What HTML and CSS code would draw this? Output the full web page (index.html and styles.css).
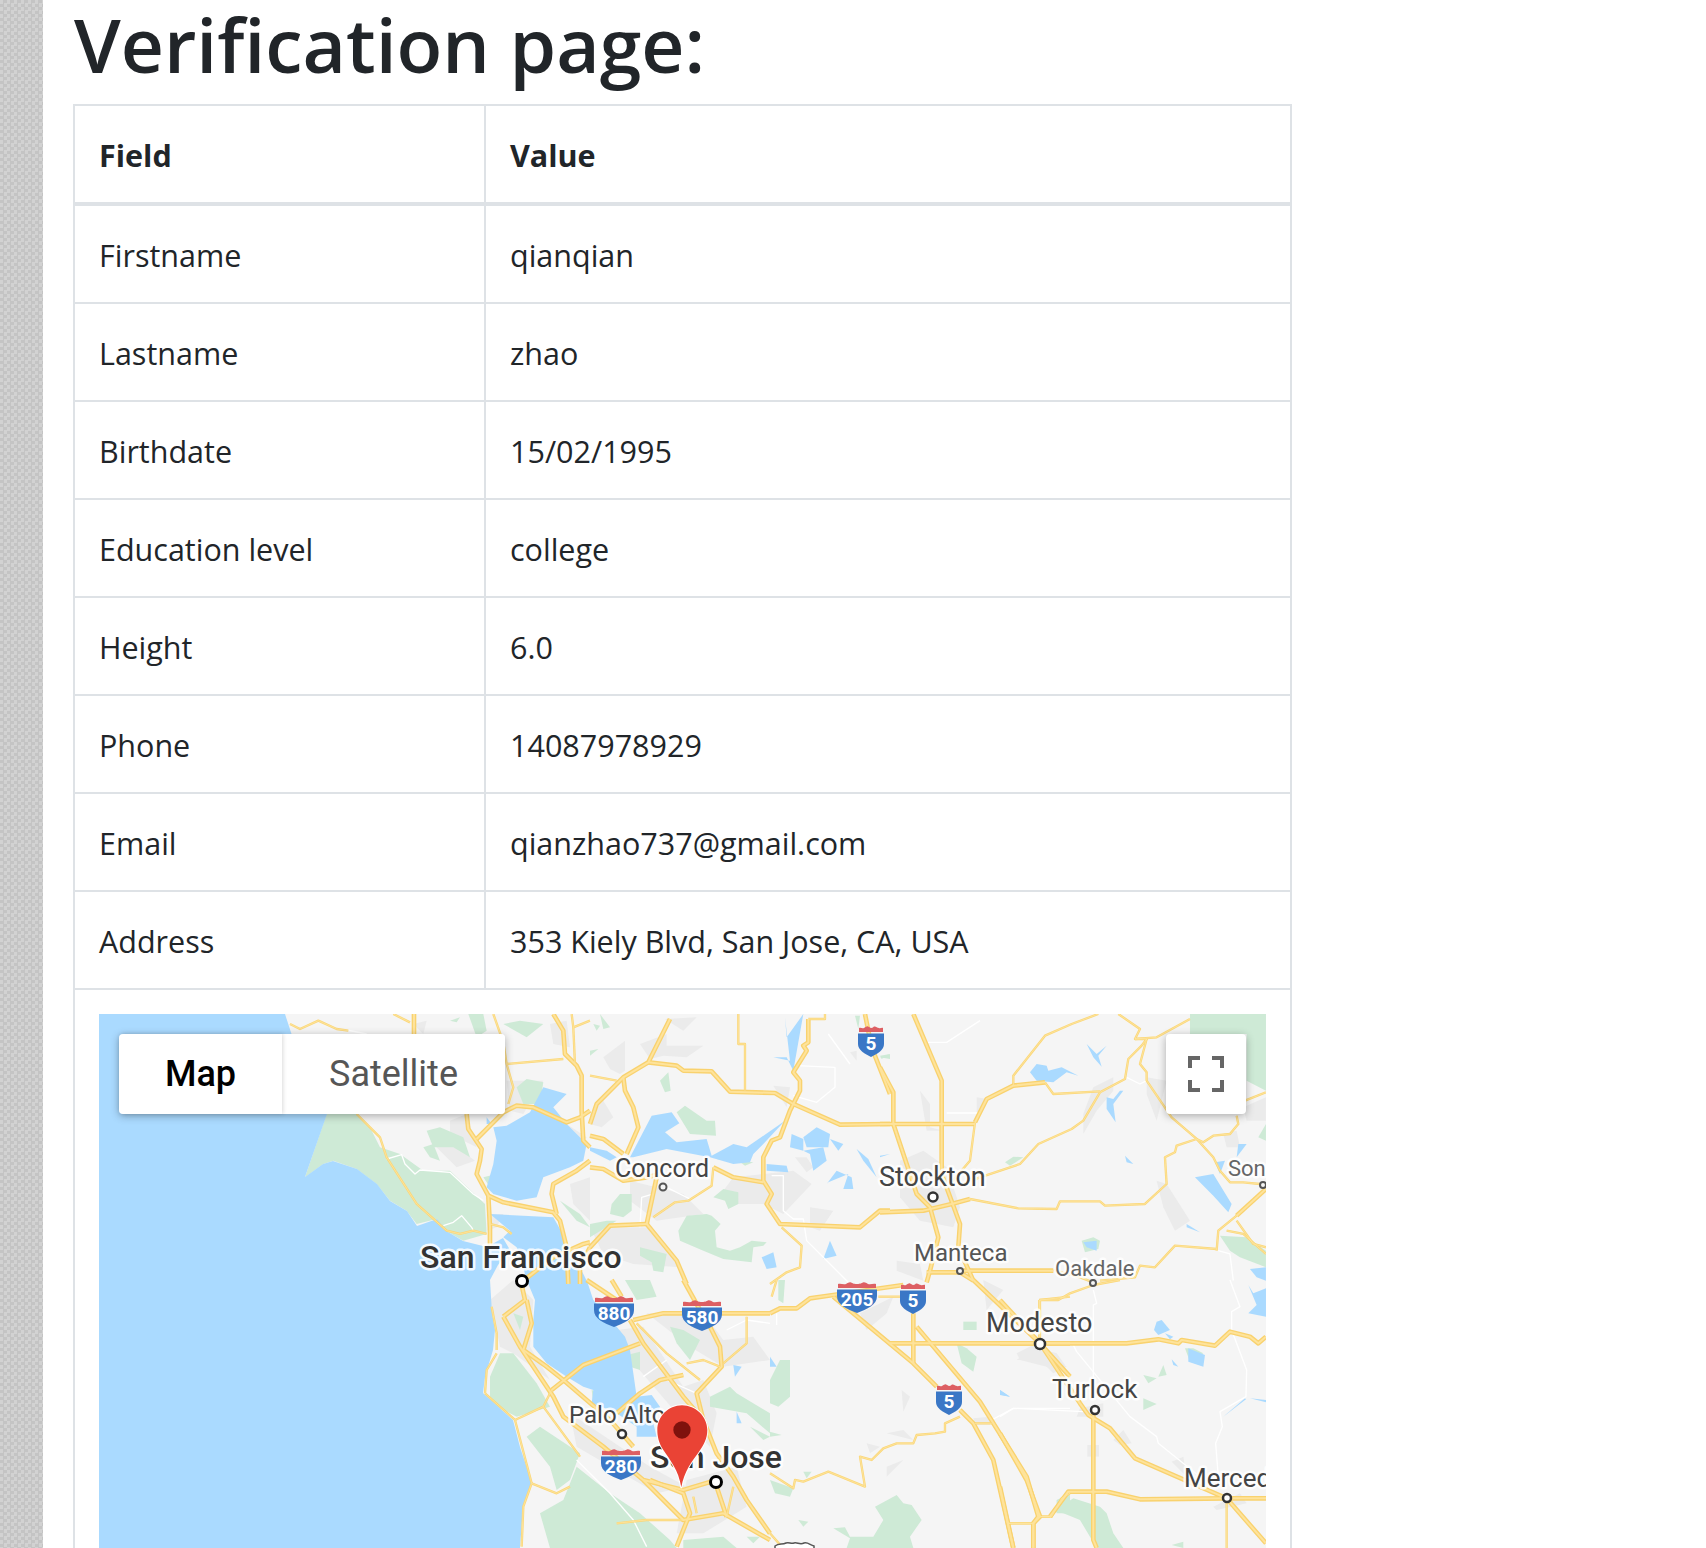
FILE: index.html
```html
<!DOCTYPE html>
<html lang="en">
<head>
<meta charset="utf-8">
<title>Verification page</title>
<link rel="stylesheet" href="styles.css">
</head>
<body>
<div class="page">
  <aside class="side"></aside>
  <main class="content">
    <h1 class="title">Verification page:</h1>
    <table class="info">
      <thead>
        <tr><th class="col-field">Field</th><th>Value</th></tr>
      </thead>
      <tbody>
        <tr><td>Firstname</td><td>qianqian</td></tr>
        <tr><td>Lastname</td><td>zhao</td></tr>
        <tr><td>Birthdate</td><td>15/02/1995</td></tr>
        <tr><td>Education level</td><td>college</td></tr>
        <tr><td>Height</td><td>6.0</td></tr>
        <tr><td>Phone</td><td>14087978929</td></tr>
        <tr><td>Email</td><td>qianzhao737@gmail.com</td></tr>
        <tr><td>Address</td><td>353 Kiely Blvd, San Jose, CA, USA</td></tr>
        <tr>
          <td colspan="2" class="map-cell">
            <div class="map">
              <svg class="map-art" viewBox="99 1014 1167 534" width="1167" height="534" xmlns="http://www.w3.org/2000/svg">
                <defs>
                  <g id="shield-wide">
                    <path class="sh-red" d="M1 7V3C4 2 6 4 9 3 11 2 12 1 14 1.500 16 2 16 3 20 3 24 3 24 2 26 1.500 28 1 29 2 31 3 34 4 36 2 39 3V7Z"/>
                    <path class="sh-blue" d="M0 8.500H40V15C40 24 30 28 20 32 10 28 0 24 0 15Z"/>
                  </g>
                  <g id="shield-narrow">
                    <path class="sh-red" d="M1 7V3C3 2 4 4 6 3 8 2 9 1 10 1.500 12 2 12 3 13 3 15 3 15 2 16 1.500 18 1 19 3 21 3 22 4 24 2 25 3V7Z"/>
                    <path class="sh-blue" d="M0 8.500H26V19C26 25 19 29 13 32 7 29 0 25 0 19Z"/>
                  </g>
                  <g id="major" fill="none">
                    <g transform="translate(290 1014) scale(.3333)">
                      <path d="M530 300 535 345 575 405 570 440 560 480 595 545 600 640 600 700"/>
                      <path d="M595 545 640 565 790 595 810 620 830 700 835 810"/>
                      <path d="M372 0V60"/>
                      <path d="M790 0 820 50 825 120 860 155 875 185 875 290 880 380 900 400"/>
                      <path d="M560 375 640 295 680 275 730 280 830 325 870 310 900 290"/>
                      <path d="M900 440 860 470 790 510 785 540 800 600"/>
                      <path d="M700 800 790 730 880 690 900 685"/>
                      <path d="M900 700 870 760 870 810"/>
                    </g>
                    <g transform="translate(470 1280) scale(.3333)">
                      <path d="M100 110 150 200 250 350 280 410 400 500 520 600 640 630 740 600"/>
                      <path d="M170 60 185 130 160 210 230 260 280 300 420 420 490 500"/>
                      <path d="M245 330 340 255 510 190"/>
                      <path d="M440 400 510 340 570 300 640 285"/>
                      <path d="M480 120 520 190 640 350 700 420 740 520 790 590 830 660 900 760"/>
                      <path d="M490 120 580 100 900 100"/>
                      <path d="M700 100 750 200 755 260 680 340 700 420"/>
                      <path d="M540 600 640 640 660 700 620 800"/>
                      <path d="M520 600 640 720 760 700 900 780"/>
                      <path d="M740 620 770 710"/>
                      <path d="M100 110 165 60 155 15"/>
                      <path d="M640 0 690 90"/>
                      <path d="M350 0 440 60"/>
                      <path d="M425 0 455 50"/>
                    </g>
                    <g transform="translate(590 1014) scale(.3333)">
                      <path d="M240 15 175 145 100 190 20 270 0 330"/>
                      <path d="M100 190 105 230 130 280 145 340 110 420"/>
                      <path d="M0 365 40 375 100 420"/>
                      <path d="M0 460 40 465 100 500 170 490 210 480"/>
                      <path d="M175 145 260 155 280 170 365 172 420 233 555 237 610 270 750 332 900 330"/>
                      <path d="M655 15V85L640 95 650 110 610 175 630 200 630 230 600 290 570 370 545 380 520 430 520 500 545 540 530 570 570 630 810 640 870 590 900 590"/>
                      <path d="M370 460 430 490 520 505"/>
                      <path d="M170 630 200 490"/>
                      <path d="M170 630 60 635 0 700"/>
                      <path d="M170 630 260 740 290 810"/>
                      <path d="M825 0 845 100 900 240"/>
                    </g>
                    <g transform="translate(770 1280) scale(.3333)">
                      <path d="M190 50 430 250 500 320"/>
                      <path d="M570 390 610 430 670 540 730 804"/>
                      <path d="M0 100 30 85 80 85 120 55 190 45 400 15"/>
                      <path d="M430 100V250"/>
                      <path d="M360 190H900"/>
                      <path d="M440 140 630 365 770 590 805 710 790 730V804"/>
                      <path d="M610 0 810 190 900 290"/>
                    </g>
                    <g transform="translate(880 1014) scale(.3333)">
                      <path d="M100 0 185 200V480L240 630 235 700 280 800"/>
                      <path d="M0 160 40 235V330L110 540 150 580 175 670 150 770 140 805"/>
                      <path d="M0 330H285"/>
                      <path d="M285 325 320 255 400 215 495 205"/>
                      <path d="M1070 605 1158 525"/>
                      <path d="M240 770H520"/>
                      <path d="M140 775H240L280 800"/>
                      <path d="M270 555 215 570 130 590 0 595"/>
                    </g>
                    <g transform="translate(1000 1280) scale(.3333)">
                      <path d="M0 60 120 190 240 370 265 405 330 445 405 535 680 655 798 790"/>
                      <path d="M280 400V780L290 804"/>
                      <path d="M0 190H380L475 178 535 190 545 180 645 197 690 155 750 170 775 190 798 170"/>
                      <path d="M0 620 40 804"/>
                      <path d="M0 460 80 600 120 710 100 730V804"/>
                      <path d="M150 710 205 635H320L420 658 680 655H798"/>
                    </g>
                  </g>
                  <g id="minor" fill="none">
                    <g transform="translate(290 1014) scale(.3333)">
                      <path d="M0 30 30 45 85 20 140 45 175 50"/>
                      <path d="M200 300 240 340 270 370 290 430 380 570 470 650 510 660 550 650 590 660"/>
                      <path d="M600 630 640 640 665 660"/>
                      <path d="M650 150 820 135"/>
                      <path d="M640 85 650 150 670 220 655 270"/>
                      <path d="M845 0 850 40 900 20"/>
                      <path d="M850 40 855 150"/>
                      <path d="M610 0 640 85"/>
                      <path d="M310 0 360 25"/>
                    </g>
                    <g transform="translate(470 1280) scale(.3333)">
                      <path d="M80 210V160L65 80"/>
                      <path d="M45 340 50 270 80 220"/>
                      <path d="M45 340 135 420 220 380 245 330"/>
                      <path d="M135 420 185 610 160 680 155 800"/>
                      <path d="M185 610 260 640 300 620"/>
                      <path d="M220 380 330 530"/>
                      <path d="M500 130 590 220 690 300"/>
                      <path d="M440 730 530 720 640 720"/>
                      <path d="M670 650 680 700"/>
                      <path d="M790 620 770 710"/>
                      <path d="M650 250 700 240 750 260"/>
                      <path d="M760 250 830 190V110"/>
                    </g>
                    <g transform="translate(590 1014) scale(.3333)">
                      <path d="M445 0V90H465V230"/>
                      <path d="M0 185 80 200"/>
                      <path d="M190 610 255 565 295 560 365 515 370 460"/>
                      <path d="M575 640 635 695 630 760 590 775 540 810"/>
                      <path d="M655 15H705V0"/>
                    </g>
                    <g transform="translate(770 1280) scale(.3333)">
                      <path d="M0 580 70 625 75 600 100 605 175 575 285 620 270 530 305 540 340 505 380 490 430 490 440 465 495 460 525 455V430L570 410"/>
                      <path d="M615 430H665"/>
                      <path d="M715 730H790"/>
                      <path d="M805 710H845L875 655 900 640"/>
                      <path d="M0 760 35 800"/>
                      <path d="M20 0 5 50"/>
                      <path d="M810 190V60L900 50"/>
                      <path d="M325 50H420"/>
                    </g>
                    <g transform="translate(880 1014) scale(.3333)">
                      <path d="M400 215V185L495 65 575 30 655 0"/>
                      <path d="M285 325 270 440 210 510"/>
                      <path d="M250 510 300 490 420 450 475 390 575 345 610 320 660 235 735 195 745 135 785 95 800 75 765 75 780 45 715 0"/>
                      <path d="M495 205 520 240 660 232"/>
                      <path d="M800 75 780 150 800 175 800 200 875 310 950 375 1000 430 1020 470 1050 505 1090 505 1140 510"/>
                      <path d="M765 75 830 70 930 15"/>
                      <path d="M1070 305 1075 330 1050 360 1000 365 970 385 950 375 890 395 885 415 855 430 860 510 795 570 675 575 660 562H540L530 585 415 583 270 555"/>
                      <path d="M1010 710 1015 650 1070 605"/>
                      <path d="M1010 705 885 695 825 760 780 755 765 790 660 800"/>
                      <path d="M1040 650 1090 660 1158 720"/>
                      <path d="M1070 620 1120 690 1158 700"/>
                      <path d="M1095 260 1158 235"/>
                      <path d="M520 768 600 790 640 805"/>
                    </g>
                    <g transform="translate(1000 1280) scale(.3333)">
                      <path d="M118 60H175L210 40 280 15 360 0"/>
                      <path d="M118 60V190"/>
                      <path d="M25 730H100"/>
                      <path d="M120 710H150"/>
                      <path d="M680 655V804"/>
                    </g>
                  </g>
                </defs>

                <rect class="land" x="99" y="1014" width="1167" height="534"/>

                <g class="urban">
                  <g transform="translate(290 1014) scale(.3333)">
                    <polygon points="480,320 530,300 560,400 480,360"/>
                    <polygon points="420,380 500,400 555,440 500,460"/>
                    <polygon points="650,200 760,200 700,300 660,290"/>
                    <polygon points="780,30 830,20 840,100 790,90"/>
                    <polygon points="370,30 410,20 400,60"/>
                    <polygon points="830,330 890,370 870,395 840,390"/>
                    <polygon points="600,530 640,510 620,540"/>
                    <polygon points="840,510 900,490 900,620 850,570"/>
                    <polygon points="590,600 640,600 620,640 590,650"/>
                  </g>
                  <g transform="translate(470 1280) scale(.3333)">
                    <polygon points="60,60 130,0 190,60 180,200 240,300 130,220 90,200"/>
                    <polygon points="440,150 520,140 640,320 700,300 740,400 720,500 620,400 500,260"/>
                    <polygon points="530,100 700,100 760,180 850,170 900,240 760,260 660,200"/>
                    <polygon points="300,400 540,560 650,620 560,640 320,500"/>
                    <polygon points="650,600 800,560 830,680 700,760 620,760"/>
                  </g>
                  <g transform="translate(590 1014) scale(.3333)">
                    <polygon points="40,130 105,80 105,170 90,180 60,165"/>
                    <polygon points="150,90 230,60 230,95 340,95 290,130 220,125 180,135"/>
                    <polygon points="225,15 320,10 280,50"/>
                    <polygon points="0,300 40,260 70,310 35,340 0,330"/>
                    <polygon points="430,490 610,470 665,510 580,600 520,570 440,570 400,530"/>
                    <polygon points="660,580 730,590 690,650 660,640"/>
                    <polygon points="615,430 650,430 670,460 650,475"/>
                    <polygon points="120,500 280,540 340,600 200,620 120,560"/>
                    <polygon points="0,640 180,640 270,760 130,750 40,720"/>
                    <polygon points="550,215 600,220 590,280"/>
                    <polygon points="780,115 800,110 800,140"/>
                  </g>
                  <g transform="translate(770 1280) scale(.3333)">
                    <polygon points="640,0 700,30 650,90"/>
                    <polygon points="270,100 370,50 350,100 290,150"/>
                    <polygon points="740,220 800,190 890,260 850,280 800,230 750,240"/>
                    <polygon points="610,415 660,410 660,435 615,435"/>
                    <polygon points="395,330 420,350 400,395"/>
                    <polygon points="350,460 400,450 430,480"/>
                    <polygon points="290,490 330,500 300,520"/>
                    <polygon points="350,560 400,540 350,590"/>
                  </g>
                  <g transform="translate(880 1014) scale(.3333)">
                    <polygon points="120,230 150,270 150,340 190,350 140,350"/>
                    <polygon points="290,250 320,255 290,330"/>
                    <polygon points="60,440 130,410 200,460 240,580 220,640 120,620 60,550"/>
                    <polygon points="640,220 700,190 700,230 650,290 610,360 610,300"/>
                    <polygon points="830,500 860,510 930,620 885,650 850,580"/>
                    <polygon points="1030,360 1070,350 1080,400 1040,400"/>
                    <polygon points="50,740 120,750 130,800 50,770"/>
                    <polygon points="1090,280 1158,250 1158,320 1100,320"/>
                    <polygon points="800,190 860,200 830,320 800,240"/>
                  </g>
                  <g transform="translate(1000 1280) scale(.3333)">
                    <polygon points="50,240 100,200 170,220 195,255 140,260 60,240"/>
                    <polygon points="340,480 370,450 395,490 360,495"/>
                    <polygon points="640,680 720,640 740,670 650,690"/>
                    <polygon points="240,385 310,370 310,410 230,410"/>
                    <polygon points="262,495 297,495 297,530 262,530"/>
                    <polygon points="515,545 550,530 560,590"/>
                  </g>
                </g>

                <g class="green">
                  <g transform="translate(290 1014) scale(.3333)">
                    <polygon points="110,300 45,490 100,450 130,440 200,465 260,510 300,560 350,590 380,630 440,615 475,655 520,680 590,660 585,570 480,470 400,470 330,420 270,400 240,340 200,300"/>
                    <polygon points="410,350 450,340 520,370 540,430 490,400 430,400"/>
                    <polygon points="400,400 430,390 450,440 420,430"/>
                    <polygon points="680,220 710,195 760,205 750,270 700,270"/>
                    <polygon points="580,490 620,480 650,500 600,520"/>
                    <polygon points="640,30 690,20 760,30 710,70"/>
                    <polygon points="480,20 510,10 500,25"/>
                    <polygon points="535,0 580,0 590,50 560,70"/>
                    <polygon points="810,560 870,600 900,640 860,620"/>
                  </g>
                  <g transform="translate(470 1280) scale(.3333)">
                    <polygon points="60,290 90,220 130,220 200,310 240,380 140,410 60,370"/>
                    <polygon points="130,100 160,110 150,150"/>
                    <polygon points="170,470 210,440 330,520 300,600 260,630 240,560"/>
                    <polygon points="320,560 420,640 510,700 600,780 620,804 240,804 210,700 280,660"/>
                    <polygon points="450,230 510,215 510,270 480,260"/>
                    <polygon points="600,140 640,150 690,180 660,240 620,190"/>
                    <polygon points="720,350 780,320 800,340 900,400 900,460 830,400 720,380"/>
                    <polygon points="365,330 395,340 370,370"/>
                    <polygon points="840,440 900,470 880,480"/>
                    <polygon points="640,780 760,770 800,804 640,804"/>
                    <polygon points="830,770 870,770 850,790"/>
                    <polygon points="465,0 540,0 560,50 500,60"/>
                  </g>
                  <g transform="translate(590 1014) scale(.3333)">
                    <polygon points="260,295 285,275 350,320 375,320 378,365 300,360"/>
                    <polygon points="210,200 235,175 242,230 225,235"/>
                    <polygon points="370,550 400,525 445,535 445,570 415,585 405,560"/>
                    <polygon points="65,570 90,540 125,540 125,590 100,610 60,600"/>
                    <polygon points="265,650 290,605 350,600 365,605 392,630 375,650 380,700 420,710 450,700 485,680 530,685 520,695 490,700 485,745 400,735 340,710 270,680"/>
                    <polygon points="150,700 230,720 220,775 190,770 185,745 150,725"/>
                    <polygon points="0,630 50,620 80,620 0,670"/>
                    <polygon points="0,110 25,105 0,125"/>
                    <polygon points="30,0 60,40 40,45"/>
                    <polygon points="10,30 30,35 20,50"/>
                    <polygon points="795,5 810,5 805,45"/>
                    <polygon points="410,425 435,410 470,420 440,435"/>
                    <polygon points="380,435 410,425 410,440"/>
                    <polygon points="335,395 360,415 330,415"/>
                    <polygon points="445,440 490,445 465,455"/>
                    <polygon points="870,130 900,120 900,135"/>
                  </g>
                  <g transform="translate(770 1280) scale(.3333)">
                    <polygon points="315,680 380,645 400,670 425,675 455,720 420,770 430,804 230,804 240,775 190,745 225,742 240,770 310,770 340,720"/>
                    <polygon points="580,125 620,125 620,150 580,150"/>
                    <polygon points="560,190 590,205 620,230 610,275 575,250"/>
                    <polygon points="0,600 70,625 60,650 15,640"/>
                    <polygon points="30,240 60,240 60,350 25,380 0,370 0,300"/>
                    <polygon points="25,0 45,0 40,70 25,60"/>
                    <polygon points="85,720 115,725 100,740"/>
                    <polygon points="0,455 35,465 0,470"/>
                    <polygon points="100,575 125,575 110,595"/>
                    <polygon points="860,660 900,640 900,700 860,700"/>
                  </g>
                  <g transform="translate(880 1014) scale(.3333)">
                    <polygon points="605,680 640,670 660,680 655,705 615,715"/>
                    <polygon points="375,445 400,428 430,430 390,455"/>
                    <polygon points="930,0 1158,0 1158,230 1100,200 1100,60 930,60 930,20"/>
                    <polygon points="1135,370 1158,330 1158,380"/>
                    <polygon points="1020,665 1100,670 1158,710 1158,760 1080,730 1050,710"/>
                    <polygon points="0,125 30,120 5,135"/>
                  </g>
                  <g transform="translate(1000 1280) scale(.3333)">
                    <polygon points="430,285 470,295 445,310"/>
                    <polygon points="490,255 500,285 475,290"/>
                    <polygon points="430,355 470,372 430,390"/>
                    <polygon points="160,695 220,655 300,680 320,700 340,760 370,804 290,804 240,720 190,700"/>
                    <polygon points="515,795 550,785 550,804"/>
                    <polygon points="555,205 580,205 610,220 570,245"/>
                  </g>
                </g>

                <polygon class="water" points="99,1014 285,1014 300,1060 327,1114 305,1177 323,1164 333,1161 357,1169 377,1184 390,1201 407,1211 417,1226 437,1219 448,1232 463,1241 487,1247 503,1238 510,1250 498,1265 490,1280 492,1313 495,1330 493,1350 485,1377 483,1393 513,1420 520,1447 532,1483 523,1507 520,1548 99,1548"/>
                <g class="water">
                  <g transform="translate(290 1014) scale(.3333)">
                    <polygon points="610,340 650,335 720,295 760,220 830,240 790,280 830,330 890,390 880,440 840,460 760,490 740,550 680,560 610,540 590,520 610,450 620,380"/>
                    <polygon points="600,600 790,610 830,680 890,800 710,800 700,760 680,700 640,670 660,650"/>
                    <polygon points="590,310 605,330 590,330"/>
                  </g>
                  <g transform="translate(470 1280) scale(.3333)">
                    <polygon points="170,0 195,60 190,120 190,200 230,250 290,290 340,320 370,330 365,370 420,390 440,400 500,440 500,470 560,470 550,430 570,380 545,345 500,350 490,280 480,210 465,170 440,140 370,60 350,0"/>
                    <polygon points="790,255 815,260 795,290"/>
                    <polygon points="800,395 815,430 800,430"/>
                  </g>
                  <g transform="translate(590 1014) scale(.3333)">
                    <polygon points="120,430 185,305 245,295 268,328 225,355 260,385 350,375 365,425 430,390 470,400 585,320 520,390 490,420 480,445 430,450 360,430 230,405 130,430"/>
                    <polygon points="0,400 50,410 80,430 60,440 0,410"/>
                    <polygon points="640,410 700,400 710,440 670,470 660,420"/>
                    <polygon points="530,450 590,455 595,475 530,470"/>
                    <polygon points="710,510 740,470 785,490 790,525 760,525 775,480 715,505"/>
                    <polygon points="700,735 720,680 740,725"/>
                    <polygon points="515,730 550,715 560,760 530,765"/>
                    <polygon points="585,10 590,70 640,0 610,170 590,130 550,130 600,140"/>
                    <polygon points="600,400 605,360 640,375 640,410"/>
                    <polygon points="640,370 680,340 720,360 715,400 650,400"/>
                    <polygon points="720,375 760,390 745,410"/>
                    <polygon points="800,405 835,435 860,490 820,440"/>
                  </g>
                  <g transform="translate(770 1280) scale(.3333)">
                    <polygon points="690,330 720,350 695,345"/>
                    <polygon points="0,230 20,260 0,260"/>
                  </g>
                  <g transform="translate(880 1014) scale(.3333)">
                    <polygon points="450,175 470,150 500,155 505,170 545,160 595,185 560,175 520,205 470,200"/>
                    <polygon points="620,90 650,120 680,95 655,125 665,158 640,130"/>
                    <polygon points="730,230 700,270 707,325 680,285 680,250 700,255 720,230"/>
                    <polygon points="735,425 760,450 740,445"/>
                    <polygon points="945,490 1000,480 1055,570 1045,595 1000,545"/>
                    <polygon points="1100,390 1070,430 1075,390"/>
                    <polygon points="1005,445 1035,440 1020,480"/>
                    <polygon points="920,630 960,655 920,640"/>
                    <polygon points="610,685 650,680 650,710 620,700"/>
                    <polygon points="1110,765 1158,760 1158,800 1130,790"/>
                    <polygon points="0,425 30,420 0,430"/>
                  </g>
                  <g transform="translate(1000 1280) scale(.3333)">
                    <polygon points="745,15 760,40 785,30 798,25 798,110 745,100 770,75"/>
                    <polygon points="470,125 485,120 510,150 475,165 462,150"/>
                    <polygon points="495,160 520,170 510,178"/>
                    <polygon points="515,238 535,260 520,255"/>
                    <polygon points="565,205 615,225 610,260 565,245"/>
                    <polygon points="0,330 30,350 0,345"/>
                    <polygon points="750,355 798,360 798,367"/>
                    <polygon points="668,412 735,355 738,358"/>
                  </g>
                </g>

                <g class="wline">
                  <g transform="translate(290 1014) scale(.3333)">
                    <path d="M290 435 335 422 345 450 375 480 390 468 480 475 550 540 580 560"/>
                    <path d="M460 635 490 625 515 605 545 640 550 650"/>
                    <path d="M170 48 230 60"/>
                  </g>
                  <g transform="translate(470 1280) scale(.3333)">
                    <path d="M320 540 420 640 490 720 530 800"/>
                    <path d="M520 290 590 240"/>
                    <path d="M590 300 680 340"/>
                    <path d="M770 150 830 120 900 130"/>
                  </g>
                  <g transform="translate(590 1014) scale(.3333)">
                    <path d="M545 485H580V590L610 615H640L650 680 780 810"/>
                    <path d="M620 155 735 160V220L680 265 610 245"/>
                    <path d="M715 60 780 150"/>
                    <path d="M230 520 300 555"/>
                    <path d="M150 640 155 550 190 540"/>
                  </g>
                  <g transform="translate(770 1280) scale(.3333)">
                    <path d="M665 420 730 385H900"/>
                    <path d="M20 100V135"/>
                  </g>
                  <g transform="translate(880 1014) scale(.3333)">
                    <path d="M130 85H200L300 20"/>
                    <path d="M200 297H295"/>
                    <path d="M740 190 780 210 800 200"/>
                    <path d="M1015 710 1050 720 1060 800"/>
                  </g>
                  <g transform="translate(1000 1280) scale(.3333)">
                    <path d="M220 195 230 215 390 410 470 470 475 490 600 590"/>
                    <path d="M280 30 290 70 280 75V300"/>
                    <path d="M690 0 720 80 695 95V150L740 270 738 350 660 395 667 440 647 490 655 590"/>
                    <path d="M0 410 40 385 250 395"/>
                  </g>
                </g>

                <use href="#minor" class="ro-minor"/>
                <use href="#major" class="ro-major"/>
                <use href="#minor" class="ri-minor"/>
                <use href="#major" class="ri-major"/>

                <path class="us-shield" d="M775 1552V1546C779 1543 782 1545 786 1543 789 1542 791 1544 794 1543 797 1542 800 1545 804 1543 808 1542 810 1545 814 1546V1552Z"/>

                <g class="city">
                  <circle class="strong" cx="522" cy="1281" r="5.500"/>
                  <circle cx="663" cy="1187" r="3.500"/>
                  <circle class="medium" cx="933" cy="1197" r="4.500"/>
                  <circle cx="960" cy="1271" r="3"/>
                  <circle cx="1093" cy="1283" r="3"/>
                  <circle class="medium" cx="1040" cy="1344" r="5"/>
                  <circle class="medium" cx="1095" cy="1410" r="4"/>
                  <circle class="medium" cx="1227" cy="1498" r="4"/>
                  <circle cx="1263" cy="1185" r="3"/>
                  <circle class="medium" cx="622" cy="1434" r="4"/>
                  <circle class="strong" cx="716" cy="1482" r="5.500"/>
                </g>

                <g class="labels">
                  <text class="lb lb-major" x="420" y="1268" font-size="32">San Francisco</text>
                  <text class="lb lb-major" x="650" y="1468" font-size="32">San Jose</text>
                  <text class="lb" x="615" y="1177" font-size="25">Concord</text>
                  <text class="lb" x="879" y="1186" font-size="27">Stockton</text>
                  <text class="lb lb-mid" x="914" y="1261" font-size="24">Manteca</text>
                  <text class="lb lb-soft" x="1055" y="1276" font-size="22">Oakdale</text>
                  <text class="lb" x="986" y="1332" font-size="27">Modesto</text>
                  <text class="lb" x="1052" y="1398" font-size="26">Turlock</text>
                  <text class="lb" x="1184" y="1487" font-size="26">Merced</text>
                  <text class="lb lb-soft" x="1228" y="1176" font-size="22">Sonora</text>
                  <text class="lb" x="569" y="1423" font-size="24">Palo Alto</text>
                </g>

                <g class="shields">
                  <use href="#shield-wide" x="594" y="1295"/>
                  <text x="614" y="1320">880</text>
                  <use href="#shield-wide" x="682" y="1299"/>
                  <text x="702" y="1324">580</text>
                  <use href="#shield-wide" x="601" y="1448"/>
                  <text x="621" y="1473">280</text>
                  <use href="#shield-wide" x="837" y="1281"/>
                  <text x="857" y="1306">205</text>
                  <use href="#shield-narrow" x="900" y="1282"/>
                  <text x="913" y="1307">5</text>
                  <use href="#shield-narrow" x="936" y="1383"/>
                  <text x="949" y="1408">5</text>
                  <use href="#shield-narrow" x="858" y="1025"/>
                  <text x="871" y="1050">5</text>
                </g>

                <g class="pin" transform="translate(580 1380) scale(.3333)">
                  <path class="pin-body" d="M304 322C296 270 270 240 250 210 235 188 232 165 232 150 232 110 265 76 306 76 347 76 382 110 382 150 382 175 372 195 355 218 335 245 312 275 304 322Z"/>
                  <circle class="pin-dot" cx="306" cy="150" r="26"/>
                </g>
              </svg>

              <div class="map-type">
                <div class="map-btn map-btn-active">Map</div>
                <div class="map-btn">Satellite</div>
              </div>
              <div class="map-full">
                <svg viewBox="0 0 36 36" width="36" height="36" xmlns="http://www.w3.org/2000/svg">
                  <path d="M0 0H12V4H4V12H0ZM24 0H36V12H32V4H24ZM0 24H4V32H12V36H0ZM32 24H36V36H24V32H32Z"/>
                </svg>
              </div>
            </div>
          </td>
        </tr>
      </tbody>
    </table>
  </main>
</div>
</body>
</html>
```

FILE: styles.css
```css
html, body {
  margin: 0;
  padding: 0;
  height: 1548px;
  overflow: hidden;
  background: #fff;
}

.page {
  display: flex;
  height: 1548px;
  overflow: hidden;
}

.side {
  flex: 0 0 43px;
  background-color: #cbcbcb;
  background-image: repeating-conic-gradient(#c4c4c4 0 25%, #d2d2d2 0 50%);
  background-size: 7px 7px;
}

.content {
  flex: 1;
  padding-left: 30px;
  color: #212529;
  font-family: "Open Sans", "Noto Sans", sans-serif;
}

.title {
  margin: 0 0 16px;
  padding-left: 1px;
  font-size: 75px;
  font-weight: 600;
  line-height: 88px;
}

.info {
  width: 1219px;
  border-collapse: collapse;
  table-layout: fixed;
  font-size: 30.500px;
  line-height: 48px;
}

.info th,
.info td {
  padding: 25px 24px 23px;
  border: 2px solid #dee2e6;
  text-align: left;
  vertical-align: top;
}

.info th {
  font-weight: 700;
  border-bottom-width: 4px;
}

.col-field {
  width: 361px;
}

.info td.map-cell {
  padding: 24px;
}

.map {
  position: relative;
  width: 1167px;
  height: 534px;
  font-family: Roboto, sans-serif;
}

.map-art {
  display: block;
}

.land { fill: #f5f5f5; }
.urban { fill: #ebebeb; }
.green { fill: #ceead6; }
.water { fill: #aadaff; }
.wline { fill: none; stroke: #fff; stroke-width: 4; stroke-linejoin: round; }

.ro-major { stroke: #f9d26e; stroke-width: 14; stroke-linejoin: round; }
.ri-major { stroke: #fee39b; stroke-width: 6; stroke-linejoin: round; }
.ro-minor { stroke: #fbd778; stroke-width: 7; stroke-linejoin: round; }
.ri-minor { stroke: #fee8ab; stroke-width: 2; stroke-linejoin: round; }

.us-shield { fill: #fff; stroke: #555; stroke-width: 1.500; }

.city circle { fill: #f5f5f5; stroke: #555; stroke-width: 2; }
.city .medium { fill: #fff; stroke: #333; stroke-width: 2.500; }
.city .strong { fill: #fff; stroke: #000; stroke-width: 3; }

.lb {
  font-family: Roboto, sans-serif;
  fill: #444;
  stroke: rgba(255, 255, 255, .85);
  stroke-width: 5px;
  paint-order: stroke;
  stroke-linejoin: round;
}
.lb-major { fill: #333; font-weight: 500; }
.lb-mid { fill: #555; }
.lb-soft { fill: #666; }

.sh-red { fill: #dd5f63; }
.sh-blue { fill: #3a77c6; }
.shields text {
  font-family: Roboto, sans-serif;
  font-size: 19px;
  font-weight: 700;
  fill: #fff;
  text-anchor: middle;
}

.pin-body { fill: #ea4335; stroke: #fff; stroke-width: 6; paint-order: stroke; stroke-linejoin: round; }
.pin-dot { fill: #7f120d; }

.map-type {
  position: absolute;
  top: 20px;
  left: 20px;
  display: flex;
  height: 80px;
  border-radius: 4px;
  box-shadow: 0 2px 8px rgba(0, 0, 0, .3);
}

.map-btn {
  display: flex;
  align-items: center;
  justify-content: center;
  background: #fff;
  color: #565656;
  font-size: 36px;
  width: 223px;
  border-radius: 0 4px 4px 0;
}

.map-btn-active {
  width: 163px;
  color: #000;
  font-weight: 500;
  border-radius: 4px 0 0 4px;
  box-shadow: 1px 0 4px rgba(0, 0, 0, .15);
  position: relative;
}

.map-full {
  position: absolute;
  top: 20px;
  right: 20px;
  display: flex;
  align-items: center;
  justify-content: center;
  width: 80px;
  height: 80px;
  background: #fff;
  border-radius: 4px;
  box-shadow: 0 2px 8px rgba(0, 0, 0, .3);
}

.map-full svg { fill: #666; display: block; }
```
